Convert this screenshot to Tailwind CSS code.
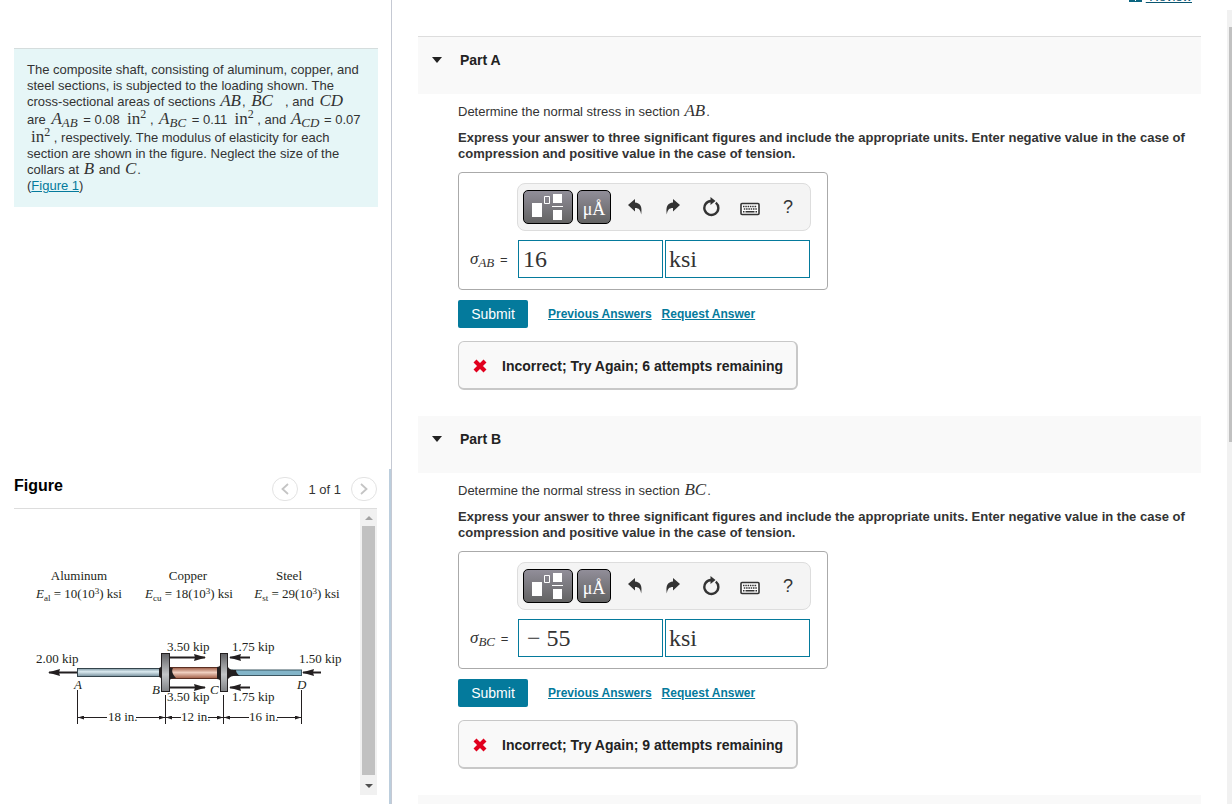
<!DOCTYPE html>
<html lang="en">
<head>
  <meta charset="UTF-8" />
  <meta name="viewport" content="width=device-width, initial-scale=1" />
  <title>Composite shaft - Part A, Part B</title>
  <script src="https://cdn.jsdelivr.net/npm/@tailwindcss/browser@4"></script>
</head>
<body class="bg-white font-['Liberation_Sans',Arial,sans-serif] text-[13px] leading-4 text-[#333]">

  <!-- shared icons -->
  <svg class="hidden">
    <symbol id="i-template" viewBox="0 0 32 26">
      <path fill="#fff" d="M0 9h10v14H0zM21 0h9v9h-9zM21 16h9v10h-9zM20 12h11v1H20z" />
      <path fill="none" stroke="#fff" d="M12.500 2.500h5v7h-5z" />
    </symbol>
    <symbol id="i-undo" viewBox="0 0 16 18">
      <path fill="#333" d="M1 7 8 1v3.500c5 .5 7.500 3.500 6.200 12C13.500 12 12 10 8 10v3.500z" />
    </symbol>
    <symbol id="i-redo" viewBox="0 0 16 18">
      <path fill="#333" d="M15 7 8 1v3.500C3 5 .5 8 1.800 16.500 2.500 12 4 10 8 10v3.500z" />
    </symbol>
    <symbol id="i-reset" viewBox="0 0 18 20">
      <path fill="none" stroke="#333" stroke-width="2.400" d="M13.800 5.600A7 7 0 1 1 9 4" />
      <path fill="#333" d="M8.500 0 13.500 4 8.500 8z" />
    </symbol>
    <symbol id="i-keyboard" viewBox="0 0 20 14">
      <rect x="1" y="1.500" width="18" height="11" rx="1" fill="#fff" stroke="#333" stroke-width="1.600" />
      <path stroke="#333" stroke-width="1.500" stroke-dasharray="1.500 .8" d="M3 4.500h14M3.800 7h13" />
      <path stroke="#333" stroke-width="1.500" d="M3 9.700h1.500M5.500 9.700h9M15.500 9.700H17" />
    </symbol>
    <symbol id="i-cross" viewBox="0 0 14 14">
      <path stroke="#e1001e" stroke-width="4.200" d="M2 2l10 10M12 2 2 12" />
    </symbol>
    <symbol id="i-caret" viewBox="0 0 10 6">
      <path fill="#222" d="M0 0h10L5 6z" />
    </symbol>
  </svg>

  <div class="flex h-screen overflow-hidden">

    <aside class="relative flex w-[392px] shrink-0 flex-col border-r border-[#c5c9d3] pl-[14px] pr-[13px] pt-12">
      <section class="border-t border-[#d5dddd] bg-[#e6f6f7] px-[13px] pb-[13px] pt-[13px]">
        <p class="whitespace-nowrap">
          The composite shaft, consisting of aluminum, copper, and<br />
          steel sections, is subjected to the loading shown. The<br />
          cross-sectional areas of sections <i class="mx-px font-['Liberation_Serif',serif] text-[17px] leading-3">AB</i>, <i class="ml-0.5 mr-3 font-['Liberation_Serif',serif] text-[17px] leading-3">BC</i>, and <i class="ml-0.5 font-['Liberation_Serif',serif] text-[17px] leading-3">CD</i><br />
          are <i class="mx-0.5 font-['Liberation_Serif',serif] text-[17px] leading-[18px]">A<sub class="text-[13px]">AB</sub></i> = 0.08&nbsp; <span class="font-['Liberation_Serif',serif] text-[17px] leading-[18px]">in<sup class="text-xs">2</sup></span> , <i class="mx-0.5 font-['Liberation_Serif',serif] text-[17px] leading-[18px]">A<sub class="text-[13px]">BC</sub></i> = 0.11&nbsp; <span class="font-['Liberation_Serif',serif] text-[17px] leading-[18px]">in<sup class="text-xs">2</sup></span> , and <i class="mx-px font-['Liberation_Serif',serif] text-[17px] leading-[18px]">A<sub class="text-[13px]">CD</sub></i> = 0.07<br />
          <span class="ml-1 font-['Liberation_Serif',serif] text-[17px] leading-[18px]">in<sup class="text-xs">2</sup></span> , respectively. The modulus of elasticity for each<br />
          section are shown in the figure. Neglect the size of the<br />
          collars at <i class="mx-px font-['Liberation_Serif',serif] text-[17px] leading-3">B</i> and <i class="mx-px font-['Liberation_Serif',serif] text-[17px] leading-3">C</i>.<br />
          (<a href="#figure" class="text-[#047a9c] underline">Figure 1</a>)
        </p>
      </section>

      <section id="figure" class="mr-px mt-auto flex flex-col pb-[9px]">
        <div class="absolute bottom-0 right-0 h-[335px] w-0.5 bg-[#bccedd]"></div>
        <header class="flex h-10 items-center border-b border-[#ddd]">
          <h2 class="mr-auto pb-1.5 text-base font-bold text-black">Figure</h2>
          <button type="button" aria-label="Previous figure" class="flex h-6 w-[26px] items-center justify-center rounded-full border border-[#e3e3e3]">
            <svg class="h-3 w-2" viewBox="0 0 8 12"><path fill="none" stroke="#c4c4c4" stroke-width="1.800" d="M7 1 1.500 6 7 11" /></svg>
          </button>
          <span class="mx-[10px] pt-0.5 text-[13px]">1 of 1</span>
          <button type="button" aria-label="Next figure" class="flex h-6 w-[26px] items-center justify-center rounded-full border border-[#e3e3e3]">
            <svg class="h-3 w-2" viewBox="0 0 8 12"><path fill="none" stroke="#c4c4c4" stroke-width="1.800" d="M1 1 6.500 6 1 11" /></svg>
          </button>
        </header>
        <div class="flex h-[286px]">
          <svg class="h-full min-w-0 flex-1 font-['Liberation_Serif',serif] text-[13px]" viewBox="14 509 346 286" fill="#231f20">
            <defs>
              <linearGradient id="alum" x2="0" y2="1"><stop stop-color="#7d97a3" /><stop offset=".4" stop-color="#dcebf1" /><stop offset="1" stop-color="#758f9c" /></linearGradient>
              <linearGradient id="copper" x2="0" y2="1"><stop stop-color="#9c5a43" /><stop offset=".45" stop-color="#f0cfc0" /><stop offset="1" stop-color="#a05c44" /></linearGradient>
              <linearGradient id="collar" x2="0" y2="1"><stop stop-color="#606164" /><stop offset=".55" stop-color="#c3c5c7" /><stop offset="1" stop-color="#808285" /></linearGradient>
              <marker id="force" markerUnits="userSpaceOnUse" markerWidth="12" markerHeight="8" refX="11" refY="4" orient="auto"><path d="M0 .5 12 4 0 7.500 1 4z" fill="#231f20" /></marker>
              <marker id="dim" markerUnits="userSpaceOnUse" markerWidth="6" markerHeight="4" refX="6" refY="2" orient="auto-start-reverse"><path d="M0 0 6 2 0 4z" fill="#231f20" /></marker>
            </defs>

            <g text-anchor="middle">
              <text x="79" y="580">Aluminum</text>
              <text x="188" y="580">Copper</text>
              <text x="289" y="580">Steel</text>
              <text x="79" y="598"><tspan font-style="italic">E</tspan><tspan dy="3" font-size="9">al</tspan><tspan dy="-3"> = 10(10</tspan><tspan dy="-4" font-size="9">3</tspan><tspan dy="4">) ksi</tspan></text>
              <text x="189" y="598"><tspan font-style="italic">E</tspan><tspan dy="3" font-size="9">cu</tspan><tspan dy="-3"> = 18(10</tspan><tspan dy="-4" font-size="9">3</tspan><tspan dy="4">) ksi</tspan></text>
              <text x="297" y="598"><tspan font-style="italic">E</tspan><tspan dy="3" font-size="9">st</tspan><tspan dy="-3"> = 29(10</tspan><tspan dy="-4" font-size="9">3</tspan><tspan dy="4">) ksi</tspan></text>
            </g>

            <!-- shaft -->
            <rect x="77.500" y="668.500" width="85" height="8" fill="url(#alum)" stroke="#34444c" />
            <rect x="170" y="667.500" width="51" height="11" fill="url(#copper)" stroke="#5a2f22" />
            <path d="M169 665c1 3 2 3 4 3-2 3 0 7 3 10-4 0-6 1-7 3zM221 664v18c-1-2-2-3-4-3v-12c2 0 3-1 4-3zM162 665v15c-1-2-2-3-3-3v-9c1 0 2-1 3-3z" />
            <rect x="229" y="670" width="72.500" height="5.500" fill="#83b5c9" stroke="#3b5661" />
            <path d="M228 667c2 3 4 3 8 3 0 2 1 4 4 6-6-1-10 0-12 3z" />
            <rect x="161.500" y="653.500" width="8" height="38" fill="url(#collar)" stroke="#231f20" />
            <rect x="220.500" y="653.500" width="7" height="38" fill="url(#collar)" stroke="#231f20" />

            <!-- forces -->
            <g stroke="#231f20" stroke-width="2">
              <path marker-end="url(#force)" d="M77 672.500H49" />
              <path marker-end="url(#force)" d="M170 657.500h35" />
              <path marker-end="url(#force)" d="M170 687.500h35" />
              <path marker-end="url(#force)" d="M250 657.500h-20" />
              <path marker-end="url(#force)" d="M250 687.500h-20" />
              <path marker-end="url(#force)" d="M321 672.500h-18" />
            </g>
            <text x="36" y="663">2.00 kip</text>
            <text x="167" y="651">3.50 kip</text>
            <text x="167" y="701">3.50 kip</text>
            <text x="232" y="651">1.75 kip</text>
            <text x="232" y="701">1.75 kip</text>
            <text x="299" y="663">1.50 kip</text>
            <g font-style="italic">
              <text x="74" y="689">A</text>
              <text x="152" y="694">B</text>
              <text x="210" y="694">C</text>
              <text x="297" y="689">D</text>
            </g>

            <!-- dimensions -->
            <path stroke="#231f20" d="M77.500 690v34M165.500 695v29M223.500 695v29M301.500 690v34" />
            <g stroke="#231f20">
              <path marker-end="url(#dim)" d="M107 717.500H78" />
              <path marker-end="url(#dim)" d="M136 717.500h29" />
              <path marker-end="url(#dim)" d="M181 717.500h-15" />
              <path marker-end="url(#dim)" d="M208 717.500h15" />
              <path marker-end="url(#dim)" d="M249 717.500h-25" />
              <path marker-end="url(#dim)" d="M277 717.500h24" />
            </g>
            <text x="108" y="721">18 in.</text>
            <text x="181" y="721">12 in.</text>
            <text x="249" y="721">16 in.</text>
          </svg>
          <div class="flex w-[17px] flex-col items-center justify-between bg-[#f1f1f1]">
            <svg class="h-[17px] w-2" viewBox="0 0 8 17"><path fill="#a3a3a3" d="M0 11h8L4 7z" /></svg>
            <div class="w-[13px] flex-1 bg-[#c1c1c1]"></div>
            <svg class="h-5 w-2" viewBox="0 0 8 20"><path fill="#505050" d="M0 9h8l-4 4z" /></svg>
          </div>
        </div>
      </section>
    </aside>

    <main class="relative min-w-0 flex-1 pl-[26px] pr-[31px]">
      <div class="-mt-[11px] flex h-[47px] items-start justify-end gap-1 pr-[9px]">
        <svg class="h-[13px] w-[13px]" viewBox="0 0 13 13"><path fill="#0b6580" d="M0 0h6v12h1V0h6v13H0z" /></svg>
        <a href="#" class="text-[#0b5671] underline">&nbsp;Review</a>
      </div>

      <section>
        <header class="flex h-[58px] items-start border-t border-[#ddd] bg-[#f9f9f9] pl-[14px] pt-[15px]">
          <button type="button" class="flex items-center gap-[18px] text-[14px] font-bold text-[#222]"><svg class="h-[6px] w-[10px]"><use href="#i-caret" /></svg>Part A</button>
        </header>
        <div class="pb-[26px] pl-10 pr-3 pt-[10px]">
          <p>Determine the normal stress in section <i class="mx-px font-['Liberation_Serif',serif] text-[17px] leading-3">AB</i>.</p>
          <p class="mt-[10px] font-bold">Express your answer to three significant figures and include the appropriate units. Enter negative value in the case of compression and positive value in the case of tension.</p>
          <form>
            <div class="mt-[10px] flex w-[370px] flex-col items-end gap-[9px] rounded border border-[#aaa] pb-[11px] pl-[11px] pr-4 pt-[10px]">
              <div class="flex h-12 w-[294px] items-center rounded-lg border border-[#ddd] bg-[#f4f4f4] pl-[5px]">
                <button type="button" aria-label="Templates" class="flex h-[34px] w-[50px] items-center justify-center rounded-[5px] border border-black bg-linear-to-b from-[#918e99] to-[#636363]"><svg class="h-[26px] w-8"><use href="#i-template" /></svg></button>
                <button type="button" aria-label="Symbols" class="ml-1 h-[34px] w-[34px] rounded-[5px] border border-black bg-linear-to-b from-[#918e99] to-[#636363] pt-1 font-['Liberation_Serif',serif] text-lg text-white">μÅ</button>
                <button type="button" aria-label="Undo" class="ml-[5px] flex w-[38px] justify-center"><svg class="h-[18px] w-4"><use href="#i-undo" /></svg></button>
                <button type="button" aria-label="Redo" class="flex w-[38px] justify-center"><svg class="h-[18px] w-4"><use href="#i-redo" /></svg></button>
                <button type="button" aria-label="Reset" class="flex w-[38px] justify-center"><svg class="h-5 w-[18px]"><use href="#i-reset" /></svg></button>
                <button type="button" aria-label="Keyboard shortcuts" class="ml-px flex w-[38px] justify-center pt-1"><svg class="h-[14px] w-5"><use href="#i-keyboard" /></svg></button>
                <button type="button" aria-label="Help" class="w-[38px] text-lg">?</button>
              </div>
              <div class="flex w-full items-center gap-0.5 pr-px">
                <label for="value-a" class="mr-auto whitespace-nowrap"><i class="mr-0.5 font-['Liberation_Serif',serif] text-[17px]">σ<sub class="text-[13px]">AB</sub></i> =</label>
                <input id="value-a" type="text" value="16" class="h-[38px] w-[145px] border border-[#047a9c] px-1 font-['Liberation_Serif',serif] text-2xl" />
                <input type="text" value="ksi" aria-label="Units" class="h-[38px] w-[145px] border border-[#047a9c] px-[3px] font-['Liberation_Serif',serif] text-2xl" />
              </div>
            </div>
            <div class="mt-[10px] flex items-center text-xs font-bold">
              <button type="submit" class="mr-5 h-7 w-[70px] rounded-xs bg-[#047a9c] text-[14px] font-normal text-white">Submit</button>
              <a href="#" class="mr-[10px] text-[#047a9c] underline">Previous Answers</a>
              <a href="#" class="text-[#047a9c] underline">Request Answer</a>
            </div>
          </form>
          <div class="mt-[13px] flex h-[49px] w-[340px] items-center gap-[15px] rounded-md border border-b-2 border-r-2 border-[#c8c8c8] bg-[#f9f9f9] pl-[14px] pt-px text-[14px] font-bold text-[#222]"><svg class="h-[14px] w-[14px]"><use href="#i-cross" /></svg>Incorrect; Try Again; 6 attempts remaining</div>
        </div>
      </section>

      <section>
        <header class="flex h-[57px] items-start bg-[#f9f9f9] pl-[14px] pt-[15px]">
          <button type="button" class="flex items-center gap-[18px] text-[14px] font-bold text-[#222]"><svg class="h-[6px] w-[10px]"><use href="#i-caret" /></svg>Part B</button>
        </header>
        <div class="pb-[26px] pl-10 pr-3 pt-[10px]">
          <p>Determine the normal stress in section <i class="mx-px font-['Liberation_Serif',serif] text-[17px] leading-3">BC</i>.</p>
          <p class="mt-[10px] font-bold">Express your answer to three significant figures and include the appropriate units. Enter negative value in the case of compression and positive value in the case of tension.</p>
          <form>
            <div class="mt-[10px] flex w-[370px] flex-col items-end gap-[9px] rounded border border-[#aaa] pb-[11px] pl-[11px] pr-4 pt-[10px]">
              <div class="flex h-12 w-[294px] items-center rounded-lg border border-[#ddd] bg-[#f4f4f4] pl-[5px]">
                <button type="button" aria-label="Templates" class="flex h-[34px] w-[50px] items-center justify-center rounded-[5px] border border-black bg-linear-to-b from-[#918e99] to-[#636363]"><svg class="h-[26px] w-8"><use href="#i-template" /></svg></button>
                <button type="button" aria-label="Symbols" class="ml-1 h-[34px] w-[34px] rounded-[5px] border border-black bg-linear-to-b from-[#918e99] to-[#636363] pt-1 font-['Liberation_Serif',serif] text-lg text-white">μÅ</button>
                <button type="button" aria-label="Undo" class="ml-[5px] flex w-[38px] justify-center"><svg class="h-[18px] w-4"><use href="#i-undo" /></svg></button>
                <button type="button" aria-label="Redo" class="flex w-[38px] justify-center"><svg class="h-[18px] w-4"><use href="#i-redo" /></svg></button>
                <button type="button" aria-label="Reset" class="flex w-[38px] justify-center"><svg class="h-5 w-[18px]"><use href="#i-reset" /></svg></button>
                <button type="button" aria-label="Keyboard shortcuts" class="ml-px flex w-[38px] justify-center pt-1"><svg class="h-[14px] w-5"><use href="#i-keyboard" /></svg></button>
                <button type="button" aria-label="Help" class="w-[38px] text-lg">?</button>
              </div>
              <div class="flex w-full items-center gap-0.5 pr-px">
                <label for="value-b" class="mr-auto whitespace-nowrap"><i class="mr-0.5 font-['Liberation_Serif',serif] text-[17px]">σ<sub class="text-[13px]">BC</sub></i> =</label>
                <input id="value-b" type="text" value="− 55" class="h-[38px] w-[145px] border border-[#047a9c] px-2 font-['Liberation_Serif',serif] text-2xl" />
                <input type="text" value="ksi" aria-label="Units" class="h-[38px] w-[145px] border border-[#047a9c] px-[3px] font-['Liberation_Serif',serif] text-2xl" />
              </div>
            </div>
            <div class="mt-[10px] flex items-center text-xs font-bold">
              <button type="submit" class="mr-5 h-7 w-[70px] rounded-xs bg-[#047a9c] text-[14px] font-normal text-white">Submit</button>
              <a href="#" class="mr-[10px] text-[#047a9c] underline">Previous Answers</a>
              <a href="#" class="text-[#047a9c] underline">Request Answer</a>
            </div>
          </form>
          <div class="mt-[13px] flex h-[49px] w-[340px] items-center gap-[15px] rounded-md border border-b-2 border-r-2 border-[#c8c8c8] bg-[#f9f9f9] pl-[14px] pt-px text-[14px] font-bold text-[#222]"><svg class="h-[14px] w-[14px]"><use href="#i-cross" /></svg>Incorrect; Try Again; 9 attempts remaining</div>
        </div>
      </section>

      <div class="h-14 bg-[#f9f9f9]"></div>

      <!-- page scrollbar -->
      <div class="absolute bottom-0 right-0 top-[10px] w-[5px] bg-[#f1f1f1] pl-0.5 pt-[17px]">
        <div class="h-[415px] bg-[#c1c1c1]"></div>
      </div>
    </main>
  </div>
</body>
</html>
